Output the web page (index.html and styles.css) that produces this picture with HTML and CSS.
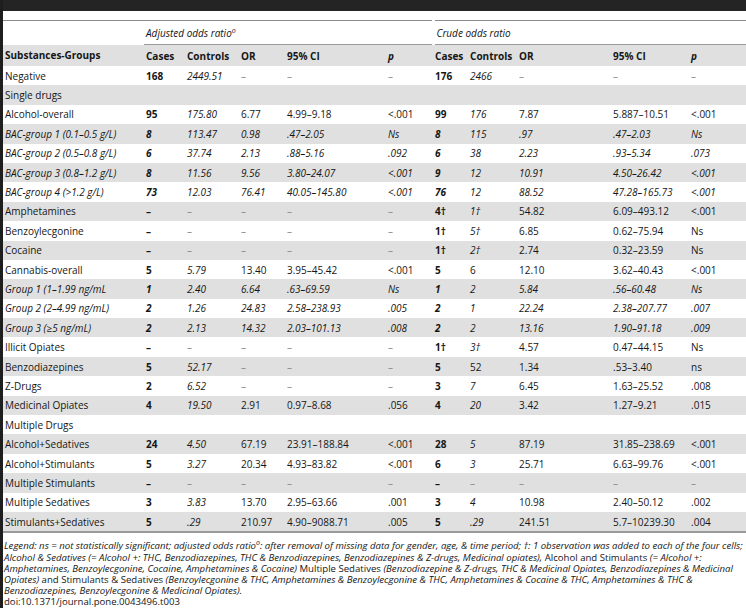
FILE: index.html
```html
<!DOCTYPE html>
<html lang="en">
<head>
  <meta charset="UTF-8" />
  <title>Table 3 - Odds ratios</title>
  <link rel="stylesheet" href="styles.css">
</head>
<body>
  <div class="page">
    <div class="topbar"></div>

    <table class="odds">
      <colgroup>
        <col class="c-name">
        <col class="c-cases">
        <col class="c-ctrl">
        <col class="c-or">
        <col class="c-ci">
        <col class="c-p">
        <col class="c-cases2">
        <col class="c-ctrl2">
        <col class="c-or2">
        <col class="c-ci2">
        <col class="c-p2">
      </colgroup>
      <thead>
        <tr class="group-row">
          <th></th>
          <th colspan="5" class="group adj">Adjusted odds ratio<sup>o</sup></th>
          <th colspan="5" class="group">Crude odds ratio</th>
        </tr>
        <tr class="head-row">
          <th>Substances-Groups</th>
          <th>Cases</th><th>Controls</th><th>OR</th><th>95% CI</th><th><i>p</i></th>
          <th>Cases</th><th>Controls</th><th>OR</th><th>95% CI</th><th><i>p</i></th>
        </tr>
      </thead>
      <tbody>
        <tr>
          <td>Negative</td>
          <td class="b">168</td><td class="i">2449.51</td><td class="d">–</td><td class="d">–</td><td class="d">–</td>
          <td class="b">176</td><td class="i">2466</td><td class="d">–</td><td class="d">–</td><td class="d">–</td>
        </tr>
        <tr>
          <td>Single drugs</td>
          <td></td><td></td><td></td><td></td><td></td><td></td><td></td><td></td><td></td><td></td>
        </tr>
        <tr>
          <td>Alcohol-overall</td>
          <td class="b">95</td><td class="i">175.80</td><td>6.77</td><td>4.99–9.18</td><td>&lt;.001</td>
          <td class="b">99</td><td class="i">176</td><td>7.87</td><td>5.887–10.51</td><td>&lt;.001</td>
        </tr>
        <tr class="sub">
          <td>BAC-group 1 (0.1–0.5 g/L)</td>
          <td class="b">8</td><td>113.47</td><td>0.98</td><td>.47–2.05</td><td>Ns</td>
          <td class="b">8</td><td>115</td><td>.97</td><td>.47–2.03</td><td>Ns</td>
        </tr>
        <tr class="sub">
          <td>BAC-group 2 (0.5–0.8 g/L)</td>
          <td class="b">6</td><td>37.74</td><td>2.13</td><td>.88–5.16</td><td>.092</td>
          <td class="b">6</td><td>38</td><td>2.23</td><td>.93–5.34</td><td>.073</td>
        </tr>
        <tr class="sub">
          <td>BAC-group 3 (0.8–1.2 g/L)</td>
          <td class="b">8</td><td>11.56</td><td>9.56</td><td>3.80–24.07</td><td>&lt;.001</td>
          <td class="b">9</td><td>12</td><td>10.91</td><td>4.50–26.42</td><td>&lt;.001</td>
        </tr>
        <tr class="sub">
          <td>BAC-group 4 (&gt;1.2 g/L)</td>
          <td class="b">73</td><td>12.03</td><td>76.41</td><td>40.05–145.80</td><td>&lt;.001</td>
          <td class="b">76</td><td>12</td><td>88.52</td><td>47.28–165.73</td><td>&lt;.001</td>
        </tr>
        <tr>
          <td>Amphetamines</td>
          <td class="b">–</td><td class="d">–</td><td class="d">–</td><td class="d">–</td><td class="d">–</td>
          <td class="b">4†</td><td class="i">1†</td><td>54.82</td><td>6.09–493.12</td><td>&lt;.001</td>
        </tr>
        <tr>
          <td>Benzoylecgonine</td>
          <td class="b">–</td><td class="d">–</td><td class="d">–</td><td class="d">–</td><td class="d">–</td>
          <td class="b">1†</td><td class="i">5†</td><td>6.85</td><td>0.62–75.94</td><td>Ns</td>
        </tr>
        <tr>
          <td>Cocaine</td>
          <td class="b">–</td><td class="d">–</td><td class="d">–</td><td class="d">–</td><td class="d">–</td>
          <td class="b">1†</td><td class="i">2†</td><td>2.74</td><td>0.32–23.59</td><td>Ns</td>
        </tr>
        <tr>
          <td>Cannabis-overall</td>
          <td class="b">5</td><td class="i">5.79</td><td>13.40</td><td>3.95–45.42</td><td>&lt;.001</td>
          <td class="b">5</td><td>6</td><td>12.10</td><td>3.62–40.43</td><td>&lt;.001</td>
        </tr>
        <tr class="sub">
          <td>Group 1 (1–1.99 ng/mL</td>
          <td class="b">1</td><td>2.40</td><td>6.64</td><td>.63–69.59</td><td>Ns</td>
          <td class="b">1</td><td>2</td><td>5.84</td><td>.56–60.48</td><td>Ns</td>
        </tr>
        <tr class="sub">
          <td>Group 2 (2–4.99 ng/mL)</td>
          <td class="b">2</td><td>1.26</td><td>24.83</td><td>2.58–238.93</td><td>.005</td>
          <td class="b">2</td><td>1</td><td>22.24</td><td>2.38–207.77</td><td>.007</td>
        </tr>
        <tr class="sub">
          <td>Group 3 (≥5 ng/mL)</td>
          <td class="b">2</td><td>2.13</td><td>14.32</td><td>2.03–101.13</td><td>.008</td>
          <td class="b">2</td><td>2</td><td>13.16</td><td>1.90–91.18</td><td>.009</td>
        </tr>
        <tr>
          <td>Illicit Opiates</td>
          <td class="b">–</td><td class="d">–</td><td class="d">–</td><td class="d">–</td><td class="d">–</td>
          <td class="b">1†</td><td class="i">3†</td><td>4.57</td><td>0.47–44.15</td><td>Ns</td>
        </tr>
        <tr>
          <td>Benzodiazepines</td>
          <td class="b">5</td><td class="i">52.17</td><td class="d">–</td><td class="d">–</td><td class="d">–</td>
          <td class="b">5</td><td>52</td><td>1.34</td><td>.53–3.40</td><td>ns</td>
        </tr>
        <tr>
          <td>Z-Drugs</td>
          <td class="b">2</td><td class="i">6.52</td><td class="d">–</td><td class="d">–</td><td class="d">–</td>
          <td class="b">3</td><td class="i">7</td><td>6.45</td><td>1.63–25.52</td><td>.008</td>
        </tr>
        <tr>
          <td>Medicinal Opiates</td>
          <td class="b">4</td><td class="i">19.50</td><td>2.91</td><td>0.97–8.68</td><td>.056</td>
          <td class="b">4</td><td class="i">20</td><td>3.42</td><td>1.27–9.21</td><td>.015</td>
        </tr>
        <tr>
          <td>Multiple Drugs</td>
          <td></td><td></td><td></td><td></td><td></td><td></td><td></td><td></td><td></td><td></td>
        </tr>
        <tr>
          <td>Alcohol+Sedatives</td>
          <td class="b">24</td><td class="i">4.50</td><td>67.19</td><td>23.91–188.84</td><td>&lt;.001</td>
          <td class="b">28</td><td class="i">5</td><td>87.19</td><td>31.85–238.69</td><td>&lt;.001</td>
        </tr>
        <tr>
          <td>Alcohol+Stimulants</td>
          <td class="b">5</td><td class="i">3.27</td><td>20.34</td><td>4.93–83.82</td><td>&lt;.001</td>
          <td class="b">6</td><td class="i">3</td><td>25.71</td><td>6.63–99.76</td><td>&lt;.001</td>
        </tr>
        <tr>
          <td>Multiple Stimulants</td>
          <td class="b">–</td><td class="d">–</td><td class="d">–</td><td class="d">–</td><td class="d">–</td>
          <td class="b">–</td><td class="d">–</td><td class="d">–</td><td class="d">–</td><td class="d">–</td>
        </tr>
        <tr>
          <td>Multiple Sedatives</td>
          <td class="b">3</td><td class="i">3.83</td><td>13.70</td><td>2.95–63.66</td><td>.001</td>
          <td class="b">3</td><td class="i">4</td><td>10.98</td><td>2.40–50.12</td><td>.002</td>
        </tr>
        <tr>
          <td>Stimulants+Sedatives</td>
          <td class="b">5</td><td class="i">.29</td><td>210.97</td><td>4.90–9088.71</td><td>.005</td>
          <td class="b">5</td><td class="i">.29</td><td>241.51</td><td>5.7–10239.30</td><td>.004</td>
        </tr>
      </tbody>
    </table>

    <p class="legend">
      <i>Legend: ns = not statistically significant; adjusted odds ratio<sup>o</sup>: after removal of missing data for gender, age, &amp; time period; †: 1 observation was added to each of the four cells;<br>
      Alcohol &amp; Sedatives (= Alcohol +: THC, Benzodiazepines, THC &amp; Benzodiazepines, Benzodiazepines &amp; Z-drugs, Medicinal opiates),</i> Alcohol and Stimulants <i>(= Alcohol +:<br>
      Amphetamines, Benzoylecgonine, Cocaine, Amphetamines &amp; Cocaine)</i> Multiple Sedatives <i>(Benzodiazepine &amp; Z-drugs, THC &amp; Medicinal Opiates, Benzodiazepines &amp; Medicinal<br>
      Opiates)</i> and Stimulants &amp; Sedatives <i>(Benzoylecgonine &amp; THC, Amphetamines &amp; Benzoylecgonine &amp; THC, Amphetamines &amp; Cocaine &amp; THC, Amphetamines &amp; THC &amp;<br>
      Benzodiazepines, Benzoylecgonine &amp; Medicinal Opiates).</i>
    </p>
    <p class="doi">doi:10.1371/journal.pone.0043496.t003</p>
  </div>
</body>
</html>
```

FILE: styles.css
```css
body {
  margin: 0;
  background: #fff;
  color: #161616;
  font-family: "Open Sans", "Liberation Sans", sans-serif;
  font-size: 10px;
}

.page {
  border-left: 3px solid #1e1e1e;
  min-height: 608px;
  box-sizing: border-box;
}

.topbar {
  height: 11px;
  background: #242424;
  margin-bottom: 9px;
}

.odds {
  width: 743px;
  table-layout: fixed;
  border-collapse: collapse;
  border-top: 1px solid #8a8a8a;
  border-bottom: 2px solid #9a9a9a;
}

.c-name  { width: 141px; }
.c-cases { width: 41px; }
.c-ctrl  { width: 54px; }
.c-or    { width: 46px; }
.c-ci    { width: 101px; }
.c-p     { width: 47px; }
.c-cases2 { width: 35px; }
.c-ctrl2 { width: 49px; }
.c-or2   { width: 94px; }
.c-ci2   { width: 78px; }
.c-p2    { width: 57px; }

.odds th, .odds td {
  text-align: left;
  padding: 0 0 0 2px;
  white-space: nowrap;
  vertical-align: middle;
}

.group-row th {
  height: 23px;
  font-weight: normal;
  font-style: italic;
}

.group {
  border-bottom: 1px solid #9a9a9a;
}

.group.adj {
  border-right: 3px solid #fff;
}

sup {
  font-size: 7px;
  line-height: 0;
  vertical-align: 4px;
}

.head-row th {
  height: 21px;
  background: #e0e0e0;
  font-weight: bold;
}

.odds td {
  height: 19.4px;
}

.odds tbody tr:nth-child(even) {
  background: #e0e0e0;
}

.b { font-weight: bold; }
.i { font-style: italic; }
.d { color: #8a8a8a; }

.sub td { font-style: italic; }

.legend {
  margin: 7px 0 0 1px;
  line-height: 11.2px;
  font-size: 9.6px;
  white-space: nowrap;
}

.doi {
  margin: 0 0 0 1px;
  line-height: 11.2px;
  font-size: 9.6px;
}
```
